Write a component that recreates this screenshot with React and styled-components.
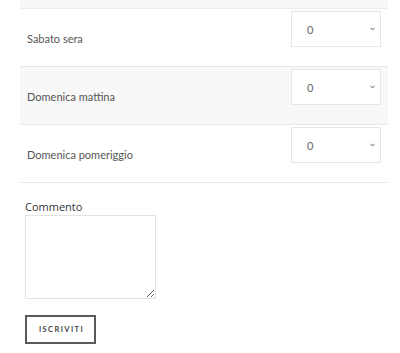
import React from "react";
import styled, { createGlobalStyle } from "styled-components";

const Global = createGlobalStyle`
  html, body { margin: 0; padding: 0; background: #fff; }
  body { font-family: Lato, "Open Sans", sans-serif; width: 400px; height: 353px; overflow: hidden; }
`;

const Table = styled.div`
  margin: 0 12px 0 20px;
  display: flex;
  flex-direction: column;
`;

const TopStrip = styled.div`
  height: 8px;
  background: #f8f8f8;
  border-bottom: 1px solid #ededed;
`;

const Row = styled.div`
  height: 57px;
  display: flex;
  justify-content: space-between;
  background: ${(p) => (p.$shaded ? "#f8f8f8" : "#fff")};
  border-bottom: 1px solid #e8e8e8;
  padding: 0 7px 0 7px;
`;

const Label = styled.div`
  align-self: center;
  padding-top: 2px;
  font-family: Lato, sans-serif;
  font-size: 11px;
  color: #555;
`;

const SelectWrap = styled.div`
  position: relative;
  margin-top: 2px;
  width: 90px;
  height: 36px;
`;

const Select = styled.select`
  appearance: none;
  -webkit-appearance: none;
  width: 90px;
  height: 36px;
  box-sizing: border-box;
  border: 1px solid #e6e6e6;
  background: #fff;
  border-radius: 0;
  padding: 0 0 0 15px;
  font-family: Lato, sans-serif;
  font-size: 11px;
  color: #666;
  outline: none;
`;

const Chevron = styled.svg`
  position: absolute;
  right: 6px;
  top: 16px;
  width: 5px;
  height: 4px;
  pointer-events: none;
`;

const Form = styled.div`
  padding: 17px 0 0 25px;
  display: flex;
  flex-direction: column;
  align-items: flex-start;
`;

const FieldLabel = styled.label`
  font-family: "Open Sans", sans-serif;
  font-size: 11px;
  line-height: 14px;
  color: #333;
`;

const TextArea = styled.textarea`
  box-sizing: border-box;
  width: 131px;
  height: 84px;
  margin: 1px 0 0;
  border: 1px solid #e2e2e2;
  background: #fff;
  outline: none;
`;

const Button = styled.button`
  margin-top: 16px;
  box-sizing: border-box;
  width: 71px;
  height: 29px;
  border: 2px solid #5a5a5a;
  background: #fff;
  font-family: Lato, sans-serif;
  font-weight: 700;
  font-size: 7.5px;
  letter-spacing: 1.4px;
  color: #444;
  padding: 0 0 0 2px;
  cursor: pointer;
`;

const rows = ["Sabato sera", "Domenica mattina", "Domenica pomeriggio"];

export default function App() {
  return (
    <>
      <Global />
      <Table>
        <TopStrip />
        {rows.map((r, i) => (
          <Row key={r} $shaded={i === 1}>
            <Label>{r}</Label>
            <SelectWrap>
              <Select defaultValue="0">
                <option value="0">0</option>
                <option value="1">1</option>
                <option value="2">2</option>
              </Select>
              <Chevron viewBox="0 0 5 4">
                <path d="M0.5 0.8 L2.5 3 L4.5 0.8" fill="none" stroke="#666" strokeWidth="1" />
              </Chevron>
            </SelectWrap>
          </Row>
        ))}
      </Table>
      <Form>
        <FieldLabel>Commento</FieldLabel>
        <TextArea />
        <Button>ISCRIVITI</Button>
      </Form>
    </>
  );
}
